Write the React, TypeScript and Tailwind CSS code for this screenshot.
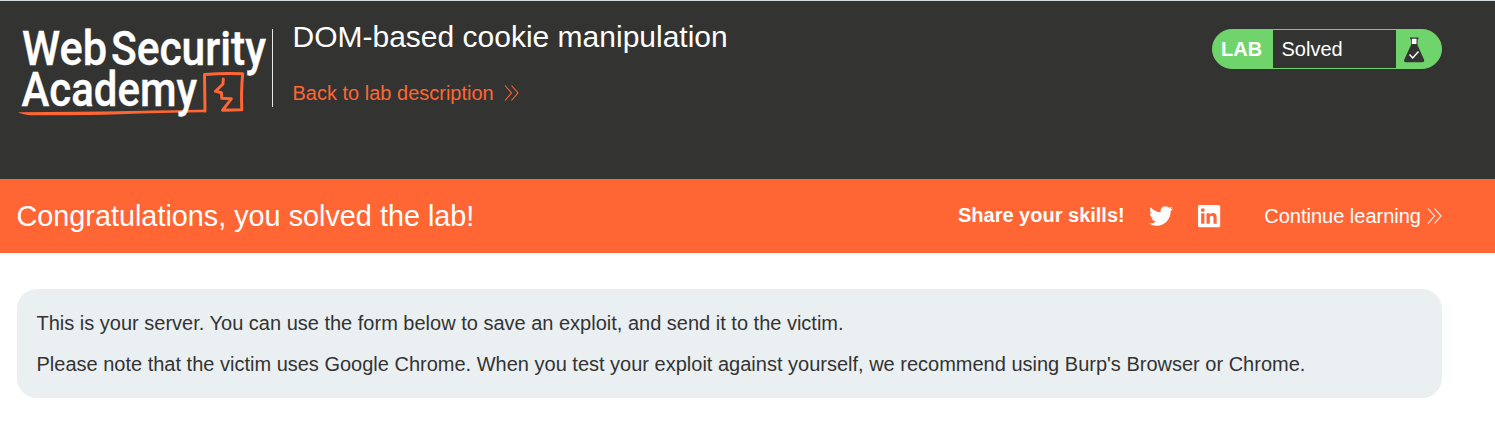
import React from "react";

function Chevrons({ className }: { className: string }) {
  return (
    <svg width="15" height="18" viewBox="0 0 15 18" fill="none" stroke="currentColor" strokeWidth="1.1" className={className}>
      <path d="M1 1.5 7.5 9 1 16.5M7.5 1.5 14 9 7.5 16.5" />
    </svg>
  );
}

function Logo() {
  return (
    <svg
      width="256"
      height="112"
      viewBox="16 15 256 112"
      role="img"
      aria-label="Web Security Academy"
      className="shrink-0"
      fontFamily="Roboto, sans-serif"
      fontWeight="500"
      fontSize="48"
    >
      <path
        d="M205 111 204.500 74.500 Q224 73 242.700 73.800 Q241 90 241.800 109.700 L222.500 110.300 231.300 98.800 221.800 98.300 221.500 92.800 215.500 91.300 223 84 223.300 79"
        fill="none"
        stroke="#ff6633"
        strokeWidth="3"
        strokeLinejoin="round"
        strokeLinecap="round"
      />
      <path d="M18 112.300 Q80 112 130 111 T206 109.500 L206 112.300 Q160 112.800 120 114.200 T30 115.200 Q22 114.400 18 112.300Z" fill="#ff6633" />
      <g fill="#ffffff" stroke="#ffffff" strokeWidth="0.4">
        <text x="22" y="65" textLength="85" lengthAdjust="spacingAndGlyphs">Web</text>
        <text x="111" y="65" textLength="155" lengthAdjust="spacingAndGlyphs">Security</text>
        <text x="21.500" y="106" textLength="175.500" lengthAdjust="spacingAndGlyphs">Academy</text>
      </g>
    </svg>
  );
}

function Flask() {
  return (
    <svg width="22" height="26" viewBox="0 0 22 26">
      <path d="M7 .5h8.500v1.700h-1v5.800l6.500 14.500q.8 2.700-1.500 2.700H2.800q-2.300 0-1.500-2.700L8 8V2.200H7Z" fill="#333332" />
      <path d="M8.800 1.700h4.700v5.300H8.800Z" fill="#fff" />
      <path d="m6.500 17.500 3.200 3.500 5.800-6.500" fill="none" stroke="#fff" strokeWidth="1.500" />
    </svg>
  );
}

function LabStatus() {
  return (
    <div className="mt-7 flex h-10 w-[230px] shrink-0 overflow-hidden rounded-full border border-[#70d46d] bg-[#70d46d] text-white">
      <div className="w-[60px] pl-2 text-[20px] leading-[39px] font-bold">LAB</div>
      <div className="w-[123px] bg-[#333332] pl-[8.500px] text-[20px] leading-[38px]">Solved</div>
      <div className="pt-[7px] pl-[6.500px]"><Flask /></div>
    </div>
  );
}

function TwitterIcon() {
  return (
    <svg width="24" height="24" viewBox="0 0 24 24" fill="currentColor">
      <path d="M23.953 4.570a10 10 0 01-2.825.775 4.958 4.958 0 002.163-2.723c-.951.555-2.005.959-3.127 1.184a4.920 4.920 0 00-8.384 4.482C7.690 8.095 4.067 6.130 1.640 3.162a4.822 4.822 0 00-.666 2.475c0 1.710.870 3.213 2.188 4.096a4.904 4.904 0 01-2.228-.616v.060a4.923 4.923 0 003.946 4.827 4.996 4.996 0 01-2.212.085 4.936 4.936 0 004.604 3.417 9.867 9.867 0 01-6.102 2.105c-.390 0-.779-.023-1.170-.067a13.995 13.995 0 007.557 2.209c9.053 0 13.998-7.496 13.998-13.985 0-.210 0-.420-.015-.630A9.935 9.935 0 0024 4.590z" />
    </svg>
  );
}

function LinkedInIcon() {
  return (
    <svg width="24" height="24" viewBox="0 0 24 24">
      <rect x="1" y="1" width="22.200" height="22.200" rx="1.500" fill="#fff" />
      <g fill="#ff6633">
        <circle cx="5.800" cy="6.100" r="1.900" />
        <path d="M4.200 9.300h3.200v10.400H4.200ZM9.500 9.300h3.100v1.400c.5-.9 1.600-1.700 3.200-1.700 3.300 0 3.900 2.200 3.900 5v5.700h-3.200v-5.100c0-1.200 0-2.800-1.700-2.800s-2 1.300-2 2.700v5.200H9.500Z" />
      </g>
    </svg>
  );
}

export default function App() {
  return (
    <div className="h-[427px] w-[1495px] overflow-hidden bg-white font-['Liberation_Sans',Arial,sans-serif] text-[20px] whitespace-nowrap text-[#333332]">
      <header className="flex h-[179px] items-start border-t border-[#d5dde0] bg-[#333332] pr-[53px] pl-4">
        <div className="pt-[14px]"><Logo /></div>
        <div className="mt-7 h-[78px] w-px bg-[#e8e8e8]" />
        <div className="ml-[19.500px] flex-1">
          <h1 className="mt-[18px] text-[30px] leading-9 text-white">DOM-based cookie manipulation</h1>
          <a href="#" className="mt-[26px] flex items-center text-[20px] leading-6 text-[#ff6633]">
            Back to lab description
            <Chevrons className="-mt-px ml-[10.500px]" />
          </a>
        </div>
        <LabStatus />
      </header>
      <section className="flex h-[74px] items-center bg-[#ff6633] pr-[53px] pl-[16.500px] text-white">
        <h2 className="flex-1 pt-[2px] text-[28.800px]">Congratulations, you solved the lab!</h2>
        <span className="mr-[24.500px] -mt-[2px] font-bold">Share your skills!</span>
        <TwitterIcon />
        <span className="mr-[43px] ml-6"><LinkedInIcon /></span>
        <a href="#" className="flex items-center">
          Continue learning
          <Chevrons className="ml-[6px]" />
        </a>
      </section>
      <main className="pt-9 pr-[53px] pl-[17px]">
        <div className="h-[109px] rounded-[20px] bg-[#eaeff2] px-[19.500px] pt-[22px]">
          <p className="leading-6">This is your server. You can use the form below to save an exploit, and send it to the victim.</p>
          <p className="mt-[17px] leading-6">Please note that the victim uses Google Chrome. When you test your exploit against yourself, we recommend using Burp's Browser or Chrome.</p>
        </div>
      </main>
    </div>
  );
}
